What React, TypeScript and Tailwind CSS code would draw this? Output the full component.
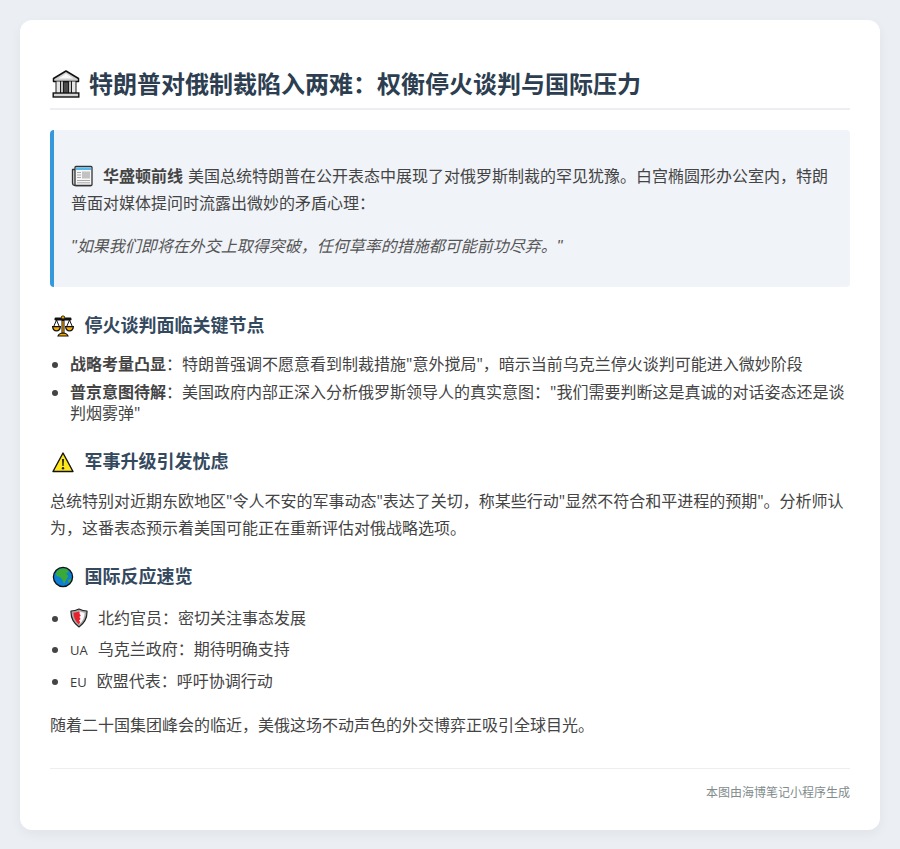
const BankIcon = () => (
  <svg viewBox="0 0 28 28" className="ml-0.5 w-7 h-7 shrink-0">
    <path d="M14 1 L26.5 8.5 V11.5 H1.5 V8.5 Z" fill="#cfcfcf" stroke="#111" strokeWidth="1.5" strokeLinejoin="round" />
    <path d="M14 3.5 L21.5 8.5 H6.5 Z" fill="#f7f7f7" />
    <rect x="3.5" y="11.5" width="21" height="11.5" fill="#1c1c1c" />
    <rect x="4.5" y="11.5" width="3.5" height="11.5" fill="#e6e6e6" />
    <rect x="9" y="11.5" width="2" height="11.5" fill="#c4c4c4" />
    <rect x="12" y="12.5" width="4" height="10.5" fill="#4a4a4a" />
    <rect x="17" y="11.5" width="2" height="11.5" fill="#c4c4c4" />
    <rect x="20" y="11.5" width="3.5" height="11.5" fill="#e6e6e6" />
    <rect x="1.2" y="23" width="25.6" height="4" fill="#d4d4d4" stroke="#111" strokeWidth="1.4" />
  </svg>
);

const NewsIcon = () => (
  <svg viewBox="0 0 22 22" className="w-[22px] h-[22px] inline-block align-[-5px]">
    <path d="M3 4.5 H20 V20.5 H4 Q1.5 20.5 1.5 18 V4.5 Z" fill="#d9d9d9" stroke="#333" strokeWidth="1.3" strokeLinejoin="round" />
    <rect x="4" y="1.5" width="17" height="19" rx="1" fill="#f6f6f6" stroke="#333" strokeWidth="1.3" />
    <rect x="5" y="2.5" width="15" height="2.5" fill="#55b8ee" />
    <rect x="6" y="7" width="4" height="1" fill="#aaa" />
    <rect x="6" y="9.5" width="4" height="1" fill="#aaa" />
    <rect x="6" y="12" width="4" height="1" fill="#aaa" />
    <rect x="11" y="6.5" width="8" height="7" fill="#c2c2c2" />
    <rect x="6" y="15" width="13" height="1" fill="#aaa" />
    <rect x="6" y="17.3" width="13" height="1" fill="#aaa" />
  </svg>
);

const ScalesIcon = () => (
  <svg viewBox="0 0 22 22" className="ml-0.5 w-[22px] h-[22px] shrink-0">
    <rect x="9.5" y="1" width="3" height="18" fill="#111" />
    <rect x="10.4" y="6" width="1.2" height="12" fill="#f5a800" />
    <rect x="2.5" y="2.6" width="17" height="2.8" rx="1.2" fill="#111" />
    <circle cx="11" cy="2.4" r="1.6" fill="#f5a800" stroke="#111" strokeWidth="0.7" />
    <path d="M4.5 5 L1.5 12 M4.5 5 L7.5 12 M17.5 5 L14.5 12 M17.5 5 L20.5 12" stroke="#111" strokeWidth="1" />
    <path d="M0.6 11.6 H8.4 Q8 15.8 4.5 15.8 Q1 15.8 0.6 11.6 Z" fill="#f5a800" stroke="#111" strokeWidth="1.2" />
    <path d="M13.6 11.6 H21.4 Q21 15.8 17.5 15.8 Q14 15.8 13.6 11.6 Z" fill="#f5a800" stroke="#111" strokeWidth="1.2" />
    <path d="M6 21 Q7 18.3 11 18 Q15 18.3 16 21 Z" fill="#f5a800" stroke="#111" strokeWidth="1.1" />
  </svg>
);

const WarnIcon = () => (
  <svg viewBox="0 0 22 22" className="ml-0.5 w-[22px] h-[22px] shrink-0">
    <path d="M11 2 L21 20.5 H1 Z" fill="#ffe81a" stroke="#111" strokeWidth="1.4" strokeLinejoin="round" />
    <path d="M10 8 H12 L11.6 15 H10.4 Z" fill="#222" />
    <circle cx="11" cy="17.2" r="1.2" fill="#222" />
  </svg>
);

const GlobeIcon = () => (
  <svg viewBox="0 0 22 22" className="ml-0.5 w-[22px] h-[22px] shrink-0">
    <circle cx="11" cy="11" r="9.6" fill="#0d7fd6" stroke="#111" strokeWidth="1.3" />
    <path d="M6 4 Q10 1.8 15 3 L17 6 L14 7.5 L16.5 10 L14 14 L12 18 L10.5 14 L8 11 L4.5 10 L4 7 Z" fill="#3aa935" />
    <path d="M16 14 L19 12.5 L18.5 15.5 L16.5 17 Z" fill="#3aa935" />
  </svg>
);

const ShieldIcon = () => (
  <svg viewBox="0 0 18 20" className="w-[18px] h-5 inline-block align-[-4px]">
    <path d="M9 1 Q13 3 17 3 Q17.5 13 9 19 Q0.5 13 1 3 Q5 3 9 1 Z" fill="#a8a8a8" stroke="#222" strokeWidth="1.2" strokeLinejoin="round" />
    <path d="M9 3.2 Q12 4.4 14.6 4.7 Q14.8 11.5 9 16.5 Z" fill="#fafafa" />
    <path d="M9.6 3.4 Q6.2 4.4 3.5 4.7 Q3.4 11.5 9 16.5 L10.2 14 L9 12.5 L10.6 11 L9.4 9 L10.8 7.5 L9.6 6 Z" fill="#e8222c" />
  </svg>
);

export default function App() {
  return (
    <div className="min-h-[849px] bg-[#ebeef3] p-5 text-[#34495e] font-['Open_Sans','Noto_Sans_CJK_SC',sans-serif]">
      <div className="rounded-xl bg-white px-[30px] pt-[30px] pb-[29px] shadow-[0_4px_12px_rgba(0,0,0,0.05)]">
        <h1 className="flex items-center gap-[9px] border-b-2 border-[#eceef1] pt-3 pb-[3px] text-2xl leading-[43px] font-bold text-[#2c3e50]">
          <BankIcon />
          特朗普对俄制裁陷入两难：权衡停火谈判与国际压力
        </h1>

        <div className="mt-5 rounded-sm border-l-4 border-[#3498db] bg-[#f0f3f8] px-[17px] pt-[33px] pb-[27px] text-base leading-[27px] text-[#444444]">
          <p>
            <NewsIcon />
            <strong className="ml-2.5 mr-[5px] font-bold">华盛顿前线</strong>
            美国总统特朗普在公开表态中展现了对俄罗斯制裁的罕见犹豫。白宫椭圆形办公室内，特朗普面对媒体提问时流露出微妙的矛盾心理：
          </p>
          <p className="mt-4 italic text-[#555555] font-['Liberation_Sans','Noto_Sans_CJK_SC',sans-serif]">"如果我们即将在外交上取得突破，任何草率的措施都可能前功尽弃。"</p>
        </div>

        <h2 className="mt-[25px] flex items-center gap-[10.5px] text-lg leading-[27px] font-bold text-[#34495e]">
          <ScalesIcon />
          停火谈判面临关键节点
        </h2>
        <ul className="mt-[15px] flex list-disc flex-col gap-[7px] pl-5 text-base leading-[21px] text-[#444444]">
          <li>
            <strong className="font-bold">战略考量凸显</strong>：特朗普强调不愿意看到制裁措施"意外搅局"，暗示当前乌克兰停火谈判可能进入微妙阶段
          </li>
          <li>
            <strong className="font-bold">普京意图待解</strong>：美国政府内部正深入分析俄罗斯领导人的真实意图："我们需要判断这是真诚的对话姿态还是谈判烟雾弹"
          </li>
        </ul>

        <h2 className="mt-[24px] flex items-center gap-[10.5px] text-lg leading-[27px] font-bold text-[#34495e]">
          <WarnIcon />
          军事升级引发忧虑
        </h2>
        <p className="mt-[13px] text-base leading-[27px] text-[#444444]">
          总统特别对近期东欧地区"令人不安的军事动态"表达了关切，称某些行动"显然不符合和平进程的预期"。分析师认为，这番表态预示着美国可能正在重新评估对俄战略选项。
        </p>

        <h2 className="mt-[21px] flex items-center gap-[10.5px] text-lg leading-[27px] font-bold text-[#34495e]">
          <GlobeIcon />
          国际反应速览
        </h2>
        <ul className="mt-[12px] flex list-disc flex-col pl-5 text-base leading-[32px] text-[#444444]">
          <li className="h-8">
            <ShieldIcon />
            <span className="ml-2.5">北约官员：密切关注事态发展</span>
          </li>
          <li className="h-8 -mt-px">
            <span className="text-[13px] text-[#3a3a3a]">UA</span>
            <span className="ml-2.5">乌克兰政府：期待明确支持</span>
          </li>
          <li className="h-8">
            <span className="text-[13px] text-[#3a3a3a]">EU</span>
            <span className="ml-2.5">欧盟代表：呼吁协调行动</span>
          </li>
        </ul>
        <p className="mt-[15px] text-base leading-[27px] text-[#444444]">随着二十国集团峰会的临近，美俄这场不动声色的外交博弈正吸引全球目光。</p>

        <div className="mt-[29px] border-t border-[#eeeeee] pt-4 text-right text-xs leading-[16px] text-[#7f8c8d]">本图由海博笔记小程序生成</div>
      </div>
    </div>
  );
}
